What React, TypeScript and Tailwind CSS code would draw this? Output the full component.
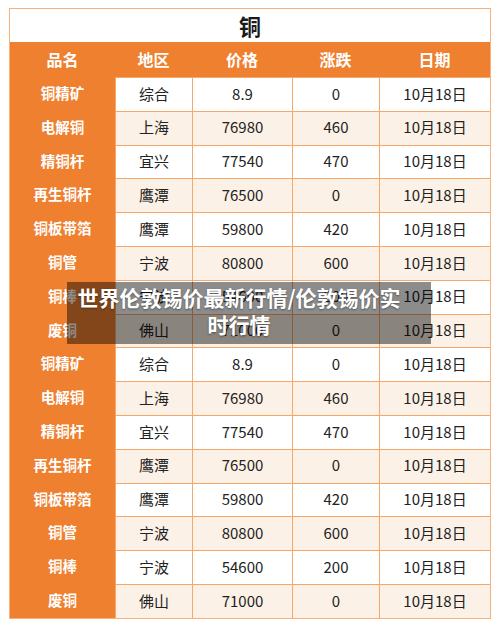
import React from "react";

const rows = [
  ["铜精矿", "综合", "8.9", "0"],
  ["电解铜", "上海", "76980", "460"],
  ["精铜杆", "宜兴", "77540", "470"],
  ["再生铜杆", "鹰潭", "76500", "0"],
  ["铜板带箔", "鹰潭", "59800", "420"],
  ["铜管", "宁波", "80800", "600"],
  ["铜棒", "宁波", "54600", "200"],
  ["废铜", "佛山", "71000", "0"],
];

const allRows = [...rows, ...rows];

export default function App() {
  return (
    <div
      className="relative w-[500px] h-[628px] bg-white overflow-hidden"
      style={{ fontFamily: '"Noto Sans CJK SC", "Noto Sans", sans-serif' }}
    >
      <div className="ml-[9px] mt-[8px] w-[482px] border border-[#f6b27c]">
        <div className="h-[33px] pb-[1px] flex items-center justify-center text-[22px] font-bold text-[#1a1a1a] bg-white">
          铜
        </div>
        <div className="grid grid-cols-[105px_77px_100px_87px_111px] h-[35px] bg-[#ee8030] text-white text-[16px] font-bold">
          <div className="flex items-center justify-center pb-[2px]">品名</div>
          <div className="flex items-center justify-center pb-[2px]">地区</div>
          <div className="flex items-center justify-center pb-[2px]">价格</div>
          <div className="flex items-center justify-center pb-[2px]">涨跌</div>
          <div className="flex items-center justify-center pb-[2px]">日期</div>
        </div>
        {allRows.map((r, i) => {
          const bg = i % 2 === 0 ? "bg-white" : "bg-[#fcf1e7]";
          return (
            <div
              key={i}
              className="grid grid-cols-[105px_77px_100px_87px_111px] h-[33.8px] text-[15px] text-[#222]"
            >
              <div className="flex items-center justify-center pb-[2px] bg-[#ee8030] text-white font-bold text-[14.5px]">
                {r[0]}
              </div>
              <div className={`flex items-center justify-center pb-[1px] border-t border-l border-[#f6a86a] ${bg}`}>{r[1]}</div>
              <div className={`flex items-center justify-center pb-[1px] border-t border-l border-[#f6a86a] ${bg}`}>{r[2]}</div>
              <div className={`flex items-center justify-center pb-[1px] border-t border-l border-[#f6a86a] ${bg}`}>{r[3]}</div>
              <div className={`flex items-center justify-center pb-[1px] border-t border-l border-[#f6a86a] ${bg}`}>10月18日</div>
            </div>
          );
        })}
      </div>

      <div className="absolute left-[67px] top-[282px] w-[364px] h-[62px] bg-black/45 pl-[7px] pr-[27px] pt-[2px] text-center text-white font-bold text-[21px] leading-[27px] [text-shadow:0_1px_2px_rgba(0,0,0,0.4)]">
        世界伦敦锡价最新行情/伦敦锡价实时行情
      </div>
    </div>
  );
}
